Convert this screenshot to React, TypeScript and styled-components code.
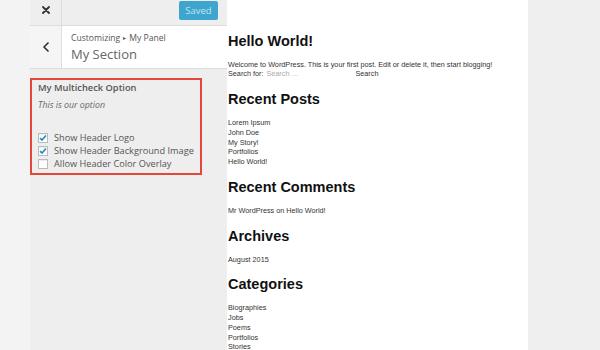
import React from "react";
import styled, { createGlobalStyle } from "styled-components";

const Global = createGlobalStyle`
  html, body { margin: 0; padding: 0; }
  body { width: 600px; height: 350px; overflow: hidden; background: #f1f1f1; }
`;

const Page = styled.div`
  display: flex;
  width: 600px;
  height: 350px;
  background: #efefef;
`;

const Gutter = styled.div`
  width: 30px;
  flex: none;
  background: #f3f3f3;
`;

const Sidebar = styled.div`
  width: 197px;
  flex: none;
  background: #eeeeee;
  display: flex;
  flex-direction: column;
  font-family: "Open Sans", "Noto Sans", sans-serif;
  color: #555;
`;

const TopBar = styled.div`
  height: 25px;
  display: flex;
  align-items: center;
  border-bottom: 1px solid #dddddd;
`;

const IconCell = styled.div<{ $bg?: string }>`
  width: 31px;
  height: 100%;
  flex: none;
  display: flex;
  align-items: center;
  justify-content: center;
  border-right: 1px solid #dddddd;
  background: ${(p) => p.$bg || "transparent"};
`;

const SavedButton = styled.div`
  margin-left: auto;
  margin-right: 9px;
  margin-top: -4px;
  width: 39px;
  height: 19px;
  border-radius: 2px;
  background: #3ea5cf;
  color: #c3e3f0;
  font-size: 9.5px;
  display: flex;
  align-items: center;
  justify-content: center;
`;

const SectionHeader = styled.div`
  height: 42px;
  display: flex;
  background: #ffffff;
  border-bottom: 1px solid #dddddd;
`;

const TitleBlock = styled.div`
  display: flex;
  flex-direction: column;
  padding: 5px 0 0 9px;
`;

const Crumb = styled.div`
  font-size: 8.6px;
  line-height: 14px;
  color: #555;
`;

const Sep = styled.span`
  font-size: 6px;
  margin: 0 3px;
  vertical-align: 1px;
`;

const SectionTitle = styled.div`
  font-size: 13px;
  line-height: 18px;
  color: #666;
  font-weight: 400;
`;

const Highlight = styled.div`
  margin: 9px 25px 0 0;
  height: 97px;
  box-sizing: border-box;
  border: 2px solid #e3463b;
  padding: 2px 0 0 6px;
`;

const ControlTitle = styled.div`
  font-size: 9.3px;
  font-weight: 600;
  line-height: 12px;
  color: #555;
`;

const ControlDesc = styled.div`
  font-size: 8.8px;
  font-style: italic;
  line-height: 12px;
  margin-top: 5px;
  color: #666;
`;

const CheckList = styled.div`
  margin-top: 20px;
  display: flex;
  flex-direction: column;
`;

const CheckRow = styled.div`
  display: flex;
  align-items: center;
  height: 13px;
  font-size: 9.2px;
  color: #555;
`;

const Box = styled.span`
  width: 10px;
  height: 10px;
  box-sizing: border-box;
  border: 1px solid #bbbbbb;
  background: #ffffff;
  margin-right: 6px;
  display: flex;
  align-items: center;
  justify-content: center;
  box-shadow: inset 0 1px 1px rgba(0, 0, 0, 0.08);
`;

const Preview = styled.div`
  width: 301px;
  flex: none;
  background: #ffffff;
  box-sizing: border-box;
  padding: 32.5px 0 0 1px;
  font-family: "Liberation Sans", Arial, sans-serif;
  color: #222;
  overflow: hidden;
`;

const H2 = styled.h2`
  font-size: 14.5px;
  line-height: 17px;
  font-weight: 700;
  margin: 12px 0 10px;
  color: #111;
  &:first-child { margin-top: 0; }
`;

const Text = styled.div`
  font-size: 7.25px;
  line-height: 9.75px;
  color: #333;
`;

const SearchRow = styled.div`
  display: flex;
  font-size: 7.25px;
  line-height: 9.75px;
  color: #333;
`;

const Placeholder = styled.span`
  color: #aaa;
  margin-left: 3px;
  width: 89px;
`;

const Close = () => (
  <svg width="8" height="8" viewBox="0 0 8 8" style={{ marginTop: -5, marginLeft: 1 }}>
    <path d="M1 1L7 7M7 1L1 7" stroke="#333" strokeWidth="1.8" strokeLinecap="round" />
  </svg>
);

const Back = () => (
  <svg width="6" height="10" viewBox="0 0 6 10">
    <path d="M5 1L1 5L5 9" stroke="#333" strokeWidth="1.7" fill="none" strokeLinecap="round" strokeLinejoin="round" />
  </svg>
);

const Check = () => (
  <svg width="9" height="8" viewBox="0 0 9 8">
    <path d="M1.2 4.2L3.4 6.4L7.8 1.2" stroke="#1e8cbe" strokeWidth="1.8" fill="none" />
  </svg>
);

const options = [
  { label: "Show Header Logo", checked: true },
  { label: "Show Header Background Image", checked: true },
  { label: "Allow Header Color Overlay", checked: false },
];

export default function App() {
  return (
    <Page>
      <Global />
      <Gutter />
      <Sidebar>
        <TopBar>
          <IconCell>
            <Close />
          </IconCell>
          <SavedButton>Saved</SavedButton>
        </TopBar>
        <SectionHeader>
          <IconCell $bg="#f5f5f5">
            <Back />
          </IconCell>
          <TitleBlock>
            <Crumb>
              Customizing<Sep>▸</Sep>My Panel
            </Crumb>
            <SectionTitle>My Section</SectionTitle>
          </TitleBlock>
        </SectionHeader>
        <Highlight>
          <ControlTitle>My Multicheck Option</ControlTitle>
          <ControlDesc>This is our option</ControlDesc>
          <CheckList>
            {options.map((o) => (
              <CheckRow key={o.label}>
                <Box>{o.checked && <Check />}</Box>
                {o.label}
              </CheckRow>
            ))}
          </CheckList>
        </Highlight>
      </Sidebar>
      <Preview>
        <H2>Hello World!</H2>
        <Text>Welcome to WordPress. This is your first post. Edit or delete it, then start blogging!</Text>
        <SearchRow>
          Search for:<Placeholder>Search …</Placeholder>Search
        </SearchRow>
        <H2>Recent Posts</H2>
        <Text>Lorem Ipsum</Text>
        <Text>John Doe</Text>
        <Text>My Story!</Text>
        <Text>Portfolios</Text>
        <Text>Hello World!</Text>
        <H2>Recent Comments</H2>
        <Text>Mr WordPress on Hello World!</Text>
        <H2>Archives</H2>
        <Text>August 2015</Text>
        <H2>Categories</H2>
        <Text>Biographies</Text>
        <Text>Jobs</Text>
        <Text>Poems</Text>
        <Text>Portfolios</Text>
        <Text>Stories</Text>
      </Preview>
    </Page>
  );
}
